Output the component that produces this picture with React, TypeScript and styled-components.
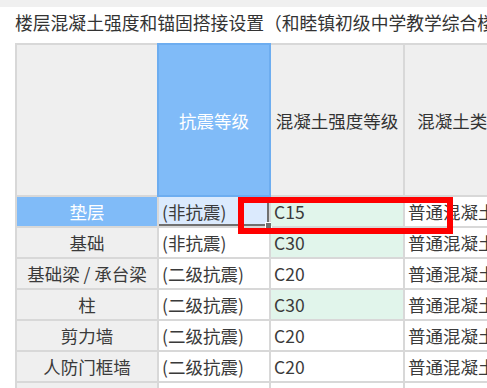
import styled, {createGlobalStyle} from "styled-components";

const GlobalStyle = createGlobalStyle`
    html, body {
        margin: 0;
        padding: 0;
        background: #ffffff;
        overflow: hidden;
    }
    body {
        font-family: "Noto Sans CJK SC", "Noto Sans", sans-serif;
        color: #333333;
        text-spacing-trim: space-all;
    }
`

type Row = {
    label: string
    seismic: string
    grade: string
    gradeTint?: boolean
    kind: string
    active?: boolean
}

const rows: Row[] = [
    {label: "垫层", seismic: "(非抗震)", grade: "C15", gradeTint: true, kind: "普通混凝土", active: true},
    {label: "基础", seismic: "(非抗震)", grade: "C30", gradeTint: true, kind: "普通混凝土"},
    {label: "基础梁 / 承台梁", seismic: "(二级抗震)", grade: "C20", kind: "普通混凝土"},
    {label: "柱", seismic: "(二级抗震)", grade: "C30", gradeTint: true, kind: "普通混凝土"},
    {label: "剪力墙", seismic: "(二级抗震)", grade: "C20", kind: "普通混凝土"},
    {label: "人防门框墙", seismic: "(二级抗震)", grade: "C20", kind: "普通混凝土"},
    {label: "", seismic: "", grade: "", kind: ""},
]

export default function App() {
    return (
        <Page>
            <GlobalStyle/>
            <TopStrip/>
            <Title>楼层混凝土强度和锚固搭接设置（和睦镇初级中学教学综合楼）</Title>
            <TableWrap>
                <Grid>
                    <HeadCell/>
                    <HeadCell $active>抗震等级</HeadCell>
                    <HeadCell>混凝土强度等级</HeadCell>
                    <HeadCell>混凝土类型</HeadCell>

                    {rows.map((r, i) => (
                        <RowGroup key={i} row={r}/>
                    ))}
                </Grid>
                <Highlight/>
            </TableWrap>
        </Page>
    );
}

const RowGroup = ({row}: {row: Row}) => (
    <>
        <LabelCell $active={row.active}>{row.label}</LabelCell>
        <DataCell $selected={row.active}>
            {row.seismic}
            {row.active && <FillHandle/>}
        </DataCell>
        <DataCell $tint={row.gradeTint}>{row.grade}</DataCell>
        <DataCell>{row.kind}</DataCell>
    </>
)

const Page = styled.div`
    width: 487px;
    height: 388px;
    overflow: hidden;
`

const TopStrip = styled.div`
    height: 7px;
    background: #f0f0f0;
`

const Title = styled.div`
    margin: 4px 0 10px 15px;
    height: 22px;
    line-height: 22px;
    font-size: 17.8px;
    white-space: nowrap;
    color: #333333;
`

const TableWrap = styled.div`
    position: relative;
    margin-left: 15px;
    width: 520px;
`

const Grid = styled.div`
    display: grid;
    grid-template-columns: 140px 110px 132px 112px;
    grid-template-rows: 150px repeat(7, 29px);
    gap: 2px;
    padding: 2px;
    background: #d8d8d8;
    font-size: 17.5px;
`

const HeadCell = styled.div<{$active?: boolean}>`
    display: flex;
    align-items: center;
    justify-content: center;
    white-space: nowrap;
    overflow: hidden;
    background: ${p => p.$active ? "#80bbf8" : "#efefef"};
    color: ${p => p.$active ? "#ffffff" : "#333333"};
    box-shadow: ${p => p.$active ? "0 0 0 2px #6dadf0" : "none"};
`

const LabelCell = styled.div<{$active?: boolean}>`
    display: flex;
    align-items: center;
    justify-content: center;
    white-space: nowrap;
    background: ${p => p.$active ? "#80bbf8" : "#efefef"};
    color: ${p => p.$active ? "#ffffff" : "#3a3a3a"};
`

const DataCell = styled.div<{$tint?: boolean; $selected?: boolean}>`
    position: relative;
    display: flex;
    align-items: center;
    padding-left: 3px;
    white-space: nowrap;
    overflow: visible;
    color: #3a3a3a;
    background: ${p => p.$selected ? "#dbeafd" : p.$tint ? "#e1f5eb" : "#ffffff"};
    box-shadow: ${p => p.$selected ? "inset -2px -2px 0 #707070" : "none"};
`

const FillHandle = styled.span`
    position: absolute;
    right: -3px;
    bottom: -3px;
    width: 5px;
    height: 5px;
    background: #707070;
    border: 1px solid #ffffff;
`

const Highlight = styled.div`
    position: absolute;
    left: 223px;
    top: 154px;
    width: 215px;
    height: 37px;
    box-sizing: border-box;
    border: 6px solid #ff0000;
    pointer-events: none;
`
